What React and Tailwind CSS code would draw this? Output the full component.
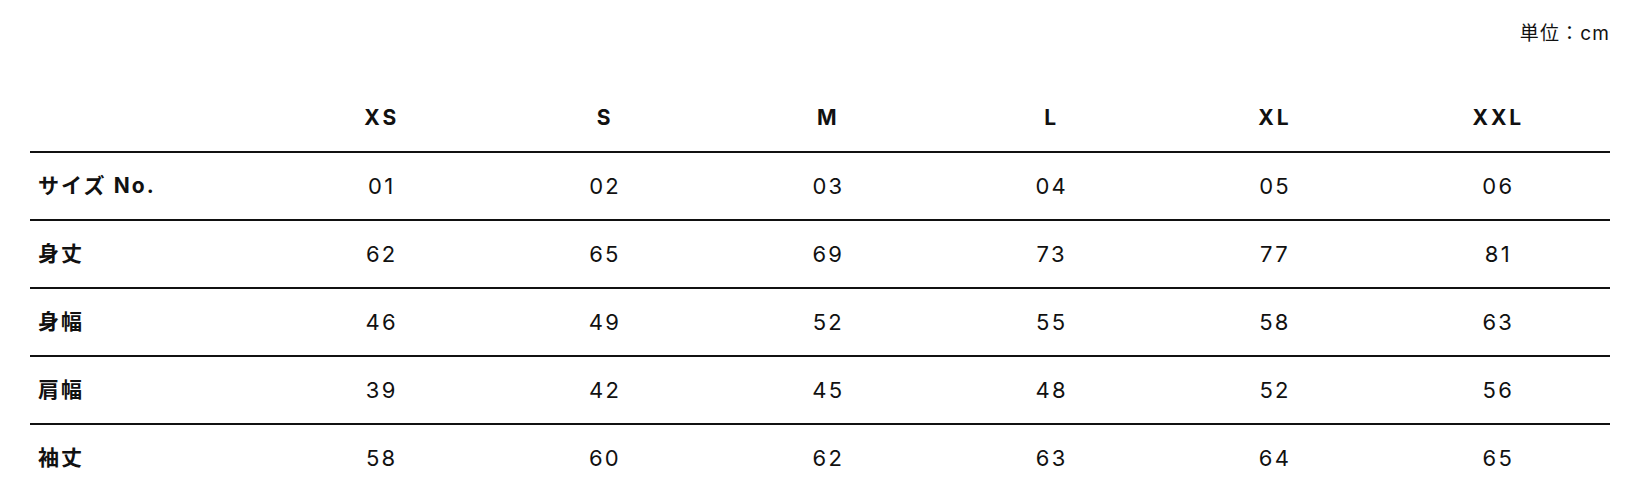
import React from "react";

const sizes = ["XS", "S", "M", "L", "XL", "XXL"];
const rows = [
  ["サイズ No.", ["01", "02", "03", "04", "05", "06"]],
  ["身丈", ["62", "65", "69", "73", "77", "81"]],
  ["身幅", ["46", "49", "52", "55", "58", "63"]],
  ["肩幅", ["39", "42", "45", "48", "52", "56"]],
  ["袖丈", ["58", "60", "62", "63", "64", "65"]],
];

export default function App() {
  return (
    <div
      className="w-[1640px] h-[484px] overflow-hidden bg-white px-[30px] text-[#111]"
      style={{ fontFamily: 'Inter, "Noto Sans CJK JP", sans-serif' }}
    >
      <div className="h-[68px] flex items-center justify-end text-[19px] tracking-[0.06em]">
        単位：cm
      </div>
      <table className="mt-4 w-full table-fixed border-collapse">
        <colgroup>
          <col className="w-[240px]" />
          {sizes.map((s) => (
            <col key={s} />
          ))}
        </colgroup>
        <thead>
          <tr className="h-[68px] border-b-2 border-[#111]">
            <th className="p-0"></th>
            {sizes.map((s) => (
              <th key={s} className="p-0 text-center text-[21px] font-bold tracking-[0.14em]">
                {s}
              </th>
            ))}
          </tr>
        </thead>
        <tbody>
          {rows.map(([label, vals]) => (
            <tr key={label} className="h-[68px] border-b-2 border-[#111]">
              <td className="p-0 pl-2 text-left text-[21px] font-bold tracking-[0.1em]">{label}</td>
              {vals.map((v, i) => (
                <td key={i} className="p-0 text-center text-[22px] tracking-[0.1em]">
                  {v}
                </td>
              ))}
            </tr>
          ))}
        </tbody>
      </table>
    </div>
  );
}
